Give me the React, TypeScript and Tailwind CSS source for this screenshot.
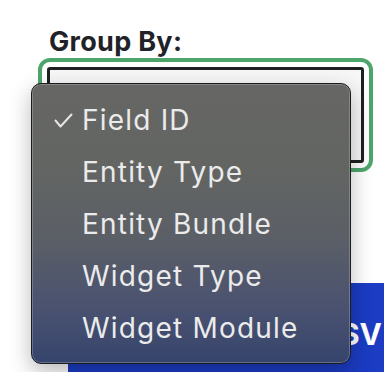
const items = ["Field ID", "Entity Type", "Entity Bundle", "Widget Type", "Widget Module"];

function Check() {
  return (
    <svg width="19" height="15" viewBox="0 0 19 15" fill="none" className="shrink-0">
      <path d="M1.5 7.5 L6.5 13.5 L17.5 1.5" stroke="#e6e6e6" strokeWidth="2" strokeLinecap="round" strokeLinejoin="round" />
    </svg>
  );
}

export default function App() {
  return (
    <div className="relative h-[372px] w-[384px] overflow-hidden bg-white font-['Inter','Liberation_Sans',sans-serif]">
      <div className="flex flex-col pl-[47px] pt-[26px]">
        <label className="ml-[2px] text-[27px] font-bold leading-[32px] tracking-[0.3px] text-[#1f2328]">Group By:</label>

        <div className="mt-[9px] h-[96px] w-[317px] rounded-[3px] border-[3px] border-[#1f2023] bg-[#f7f7f7] outline-[4px] outline-offset-[5px] outline-[#4ea56b] outline-solid" />

        <button className="mt-[120px] ml-[21px] flex h-[100px] w-[316px] items-start justify-end bg-[#1b3cc3] pt-[33px] pr-[2px] text-[30px] font-bold leading-[36px] text-white">
          Export CSV
        </button>
      </div>

      {/* open select menu */}
      <div className="absolute top-[83px] left-[31px] h-[281px] w-[320px] rounded-[10px] border border-[#1c1c1e] bg-[linear-gradient(180deg,#666765_0%,#636563_30%,#5b5f66_55%,#4a5270_80%,#36446c_100%)] py-[10px] shadow-[inset_0_0_0_1px_rgba(255,255,255,0.22),0_8px_22px_rgba(0,0,0,0.28)]">
        {items.map((item, i) => (
          <div key={item} className="flex h-[52px] items-center text-[28px] leading-[52px] tracking-[1.2px] text-[#ebebeb]">
            <div className="flex w-[50px] justify-end pr-[9px]">{i === 0 && <Check />}</div>
            <span>{item}</span>
          </div>
        ))}
      </div>
    </div>
  );
}
